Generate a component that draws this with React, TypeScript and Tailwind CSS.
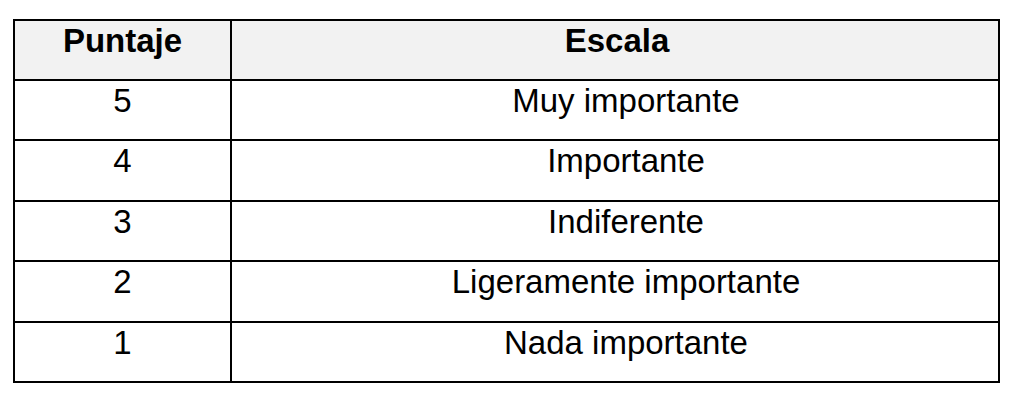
import React from "react";

const rows: { p: string; s: string; h: string }[] = [
  { p: "5", s: "Muy importante", h: "h-[60px]" },
  { p: "4", s: "Importante", h: "h-[61px]" },
  { p: "3", s: "Indiferente", h: "h-[60px]" },
  { p: "2", s: "Ligeramente importante", h: "h-[61px]" },
  { p: "1", s: "Nada importante", h: "h-[60px]" },
];

export default function App() {
  return (
    <div
      className="w-[1017px] h-[400px] bg-white pt-[19px] pl-[13px] text-black"
      style={{ fontFamily: '"Liberation Sans", Arial, Helvetica, sans-serif' }}
    >
      <div className="w-[987px] border-2 border-black flex flex-col">
        <div className="flex h-[58px] bg-[#f2f2f2] font-bold text-[33px] leading-[36px]">
          <div className="w-[217px] border-r-2 border-black flex justify-center pt-[2px]">Puntaje</div>
          <div className="flex-1 flex justify-center pt-[2px] pl-[4px]">Escala</div>
        </div>
        {rows.map((r) => (
          <div key={r.p} className={`flex ${r.h} border-t-2 border-black text-[33px] leading-[36px]`}>
            <div className="w-[217px] border-r-2 border-black flex justify-center pt-[2px]">{r.p}</div>
            <div className="flex-1 flex justify-center pt-[2px] pl-[22px]">{r.s}</div>
          </div>
        ))}
      </div>
    </div>
  );
}
